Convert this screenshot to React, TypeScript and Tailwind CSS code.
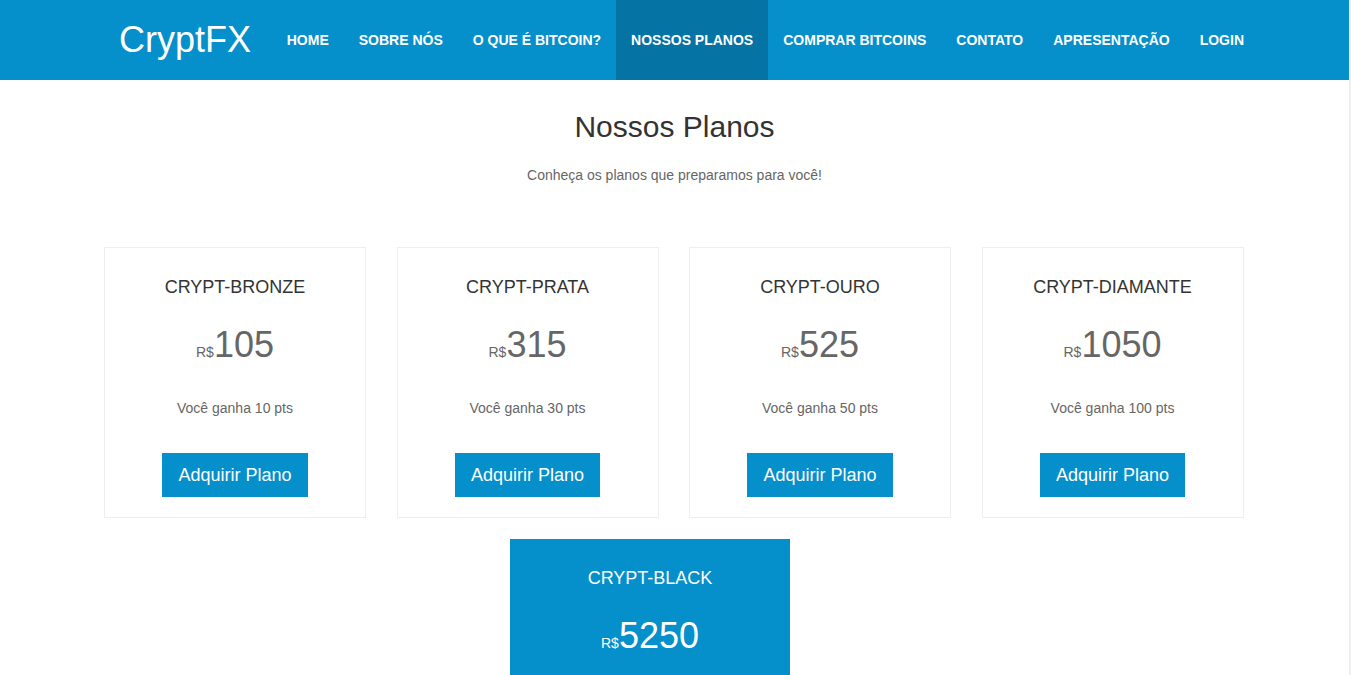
const navItems = [
  "HOME",
  "SOBRE NÓS",
  "O QUE É BITCOIN?",
  "NOSSOS PLANOS",
  "COMPRAR BITCOINS",
  "CONTATO",
  "APRESENTAÇÃO",
  "LOGIN",
];

const plans = [
  { name: "CRYPT-BRONZE", price: "105", pts: "10" },
  { name: "CRYPT-PRATA", price: "315", pts: "30" },
  { name: "CRYPT-OURO", price: "525", pts: "50" },
  { name: "CRYPT-DIAMANTE", price: "1050", pts: "100" },
];

function PlanCard(props: { name: string; price: string; pts: string }) {
  return (
    <div className="w-[262px] h-[271px] border border-[#eeeeee] flex flex-col items-center">
      <h3 className="mt-[27px] text-[18px] leading-[24px] text-[#333]">{props.name}</h3>
      <div className="mt-[24px] flex items-baseline text-[#666]">
        <span className="text-[14px]">R$</span>
        <span className="text-[36px] leading-[44px]">{props.price}</span>
      </div>
      <p className="mt-[31px] text-[14px] leading-[20px] text-[#666]">
        Você ganha {props.pts} pts
      </p>
      <button className="mt-[35px] h-[44px] px-[16px] bg-[#058fcb] text-white text-[18px]">
        Adquirir Plano
      </button>
    </div>
  );
}

export default function App() {
  return (
    <div className="flex min-h-[675px] font-['Liberation_Sans',Arial,sans-serif] bg-white">
      <div className="flex-1 overflow-hidden">
        <header className="h-[80px] bg-[#058fcb]">
          <div className="w-[1170px] ml-[89px] flex items-center h-full">
            <a className="pl-[30px] text-[36px] text-white leading-[80px] whitespace-nowrap">CryptFX</a>
            <nav className="ml-auto flex h-full whitespace-nowrap">
              {navItems.map((item) => (
                <a
                  key={item}
                  className={
                    "px-[15px] h-full flex flex-none items-center text-[14px] font-bold text-white " +
                    (item === "NOSSOS PLANOS" ? "bg-[#0673a5]" : "")
                  }
                >
                  {item}
                </a>
              ))}
            </nav>
          </div>
        </header>

        <section className="text-center">
          <h2 className="mt-[27px] text-[30px] leading-[40px] text-[#333]">Nossos Planos</h2>
          <p className="mt-[18px] text-[14px] leading-[20px] text-[#666]">
            Conheça os planos que preparamos para você!
          </p>
        </section>

        <div className="w-[1170px] ml-[89px] mt-[62px] grid grid-cols-4">
          {plans.map((p) => (
            <div key={p.name} className="px-[15px]">
              <PlanCard {...p} />
            </div>
          ))}
        </div>

        <div className="w-[1170px] ml-[89px] mt-[21px] flex">
          <div className="ml-[421px] w-[280px] h-[140px] bg-[#058fcb] flex flex-col items-center text-white">
            <h3 className="mt-[27px] text-[18px] leading-[24px]">CRYPT-BLACK</h3>
            <div className="mt-[24px] flex items-baseline">
              <span className="text-[14px]">R$</span>
              <span className="text-[36px] leading-[44px]">5250</span>
            </div>
          </div>
        </div>
      </div>
      <div className="w-[2px] bg-[#eeeeee]" />
    </div>
  );
}
